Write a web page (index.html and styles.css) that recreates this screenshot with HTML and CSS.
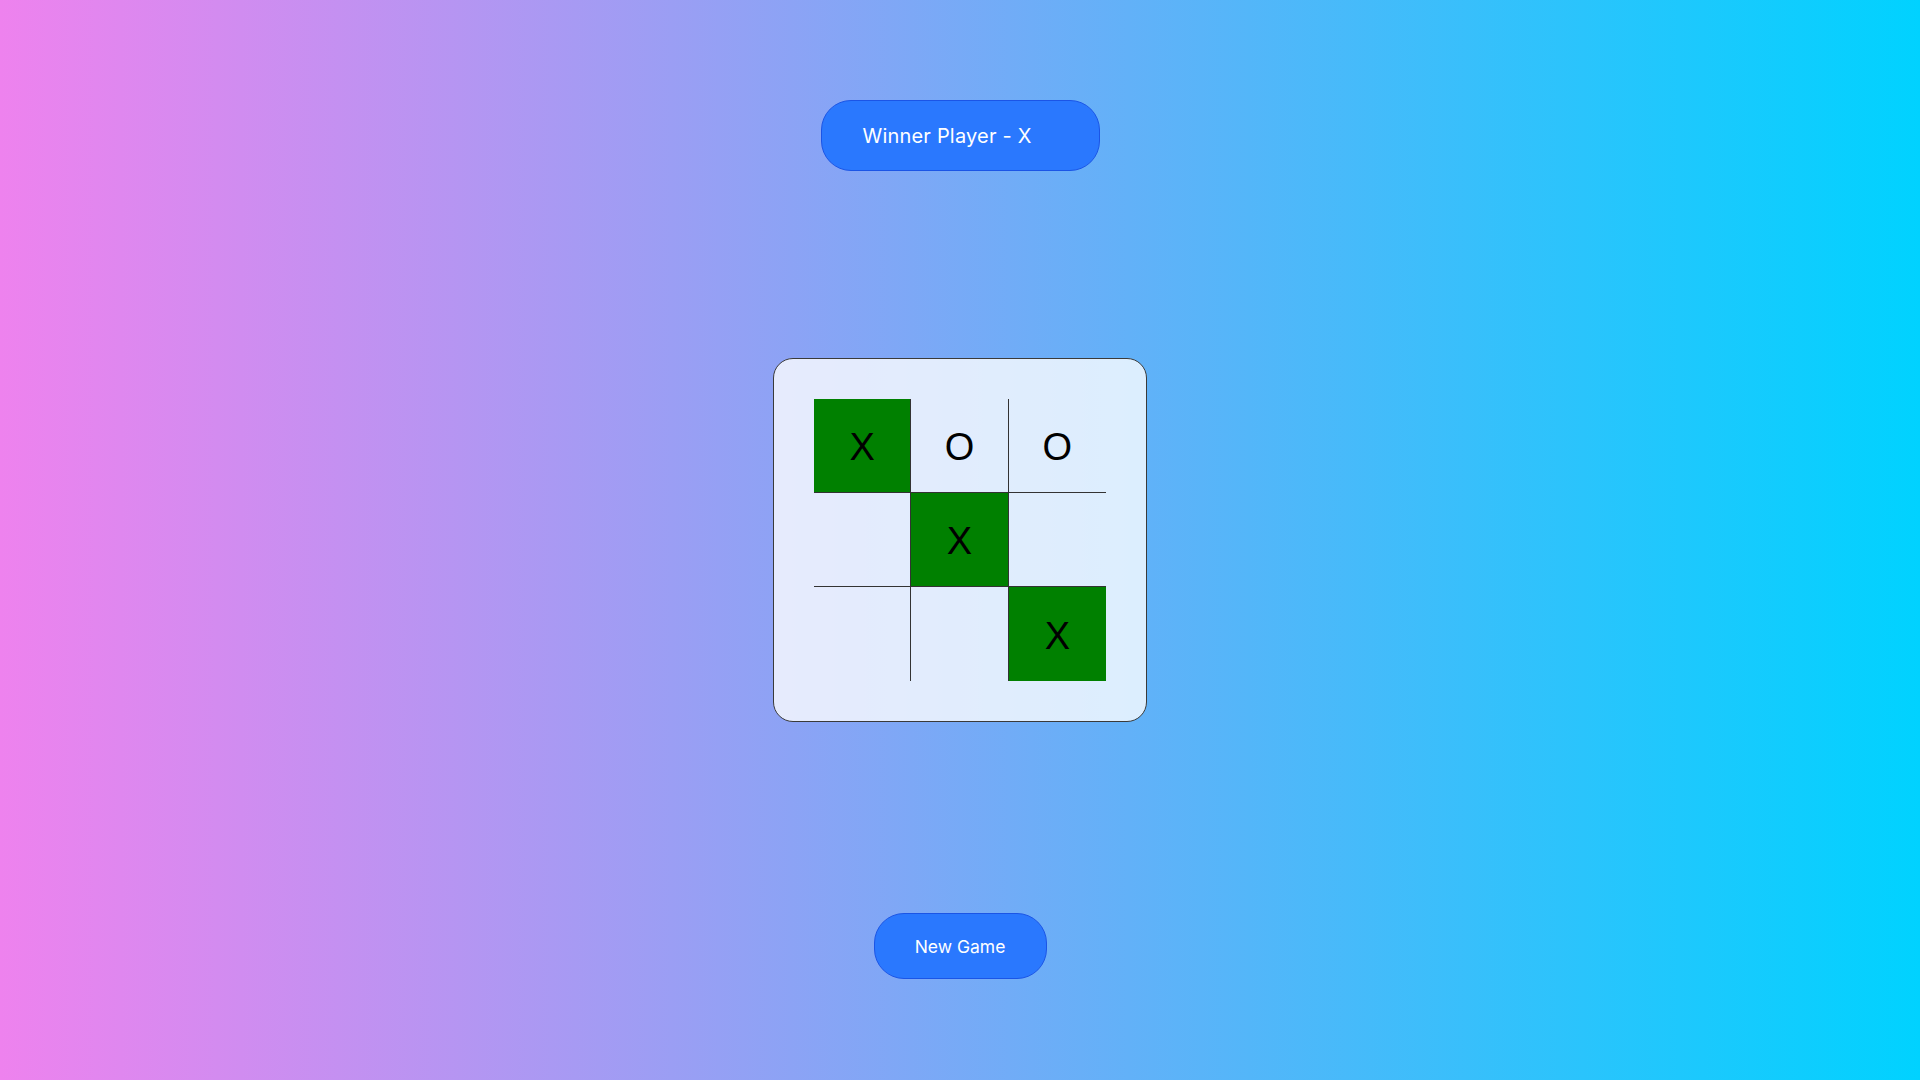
FILE: index.html
```html
<!DOCTYPE html>
<html lang="en">
<head>
<meta charset="utf-8">
<title>Tic Tac Toe</title>
<link rel="stylesheet" href="styles.css">
</head>
<body>
<main class="game">
  <div class="msg">Winner Player - X</div>
  <div class="board">
    <div class="grid">
      <div class="cell r0 c0 win">X</div>
      <div class="cell r0 c1">O</div>
      <div class="cell r0 c2">O</div>
      <div class="cell r1 c0"></div>
      <div class="cell r1 c1 win">X</div>
      <div class="cell r1 c2"></div>
      <div class="cell r2 c0"></div>
      <div class="cell r2 c1"></div>
      <div class="cell r2 c2 win">X</div>
    </div>
  </div>
  <button class="new-game">New Game</button>
</main>
</body>
</html>
```

FILE: styles.css
```css
html, body {
  margin: 0;
  padding: 0;
  height: 100%;
}
body {
  background: linear-gradient(to right, #ee82ee, #00d2ff);
  font-family: "Inter", "Noto Sans", sans-serif;
}
.game {
  height: 1080px;
  display: flex;
  flex-direction: column;
  align-items: center;
  padding-top: 100px;
  box-sizing: border-box;
}
.msg {
  box-sizing: border-box;
  width: 279px;
  height: 71px;
  padding-left: 41px;
  display: flex;
  align-items: center;
  background: #2a78fe;
  border: 1px solid #1b55e6;
  border-radius: 30px;
  color: #fff;
  font-size: 20px;
  letter-spacing: 0.2px;
}
.board {
  margin-top: 187px;
  box-sizing: border-box;
  width: 374px;
  height: 364px;
  padding: 40px;
  background: rgba(255, 255, 255, 0.78);
  border: 1px solid #3a3a3a;
  border-radius: 20px;
}
.grid {
  display: grid;
  grid-template-columns: repeat(3, 1fr);
  grid-template-rows: repeat(3, 94px);
  width: 292px;
}
.cell {
  box-sizing: border-box;
  display: flex;
  align-items: center;
  justify-content: center;
  padding-top: 4px;
  font-family: "Liberation Sans", Arial, sans-serif;
  font-size: 38px;
  color: #000;
}
.c0, .c1 { border-right: 1px solid #333; }
.r0, .r1 { border-bottom: 1px solid #333; }
.win { background: #008000; }
.new-game {
  margin-top: 191px;
  box-sizing: border-box;
  width: 173px;
  height: 66px;
  background: #2a78fe;
  border: 1px solid #1b55e6;
  border-radius: 30px;
  color: #fff;
  font-family: "Inter", "Noto Sans", sans-serif;
  font-size: 17.5px;
  padding: 0;
}
```
